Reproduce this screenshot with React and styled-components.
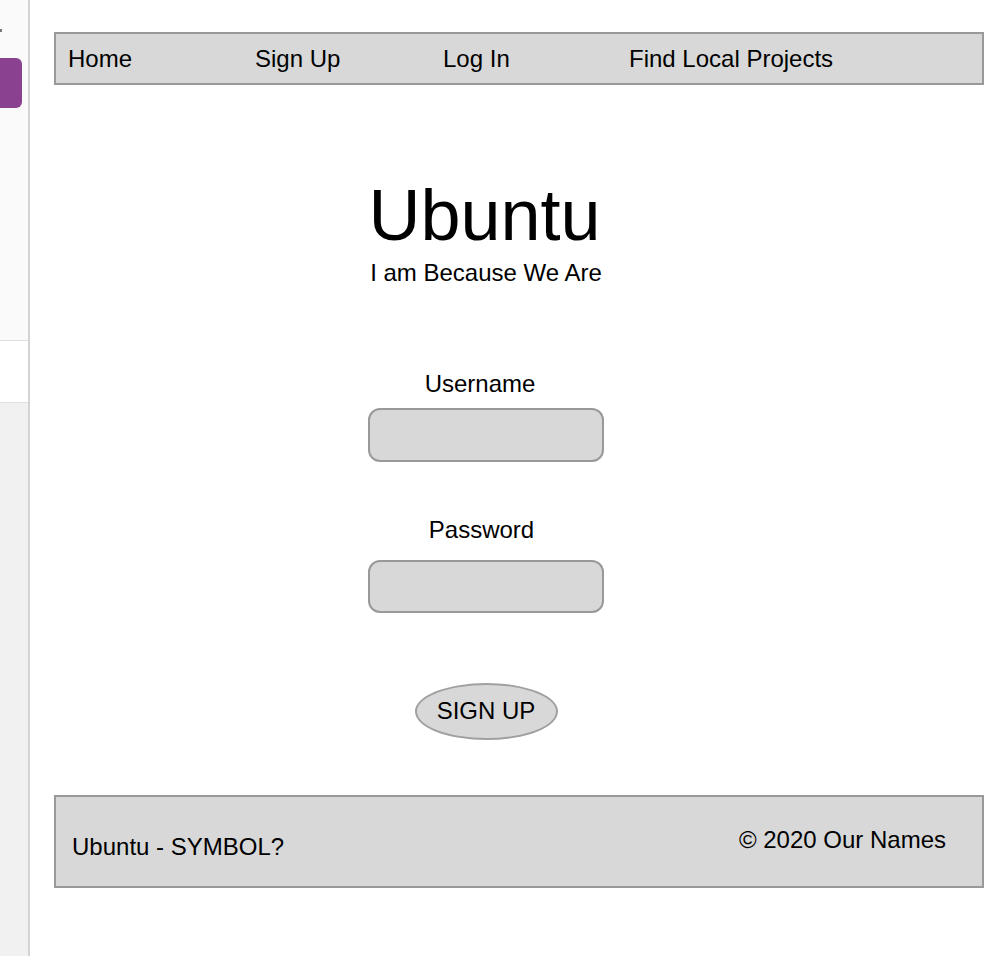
import React from "react";
import styled, { createGlobalStyle } from "styled-components";

const GlobalStyle = createGlobalStyle`
  html, body {
    margin: 0;
    padding: 0;
    background: #ffffff;
    font-family: "Liberation Sans", Arial, Helvetica, sans-serif;
    color: #000;
  }
  * {
    box-sizing: border-box;
  }
`;

const Shell = styled.div`
  display: flex;
  min-height: 100vh;
`;

const Sidebar = styled.aside`
  width: 30px;
  flex-shrink: 0;
  display: flex;
  flex-direction: column;
  border-right: 2px solid #d4d4d4;
  overflow: hidden;
`;

const SideSection = styled.div`
  height: ${(p) => (p.$height ? `${p.$height}px` : "auto")};
  flex: ${(p) => (p.$grow ? 1 : "none")};
  background: ${(p) => p.$bg};
  border-bottom: ${(p) => (p.$line ? "1px solid #dfdfdf" : "none")};
  display: flex;
  flex-direction: column;
`;

const Tick = styled.span`
  width: 2px;
  height: 3px;
  margin-top: 29px;
  background: #7a7a7a;
`;

const PurpleTab = styled.div`
  width: 22px;
  height: 50px;
  margin-top: 26px;
  background: #8a4190;
  border-radius: 0 6px 6px 0;
`;

const Page = styled.div`
  width: 954px;
  padding: 32px 0 0 24px;
`;

const Nav = styled.nav`
  width: 930px;
  height: 53px;
  display: grid;
  grid-template-columns: 187px 188px 186px auto;
  padding: 13px 0 12px 12px;
  background: #d8d8d8;
  border: 2px solid #999999;
`;

const NavLink = styled.a`
  font-size: 24px;
  line-height: 24px;
  color: #000;
  text-decoration: none;
  cursor: pointer;
`;

const FormColumn = styled.main`
  width: 236px;
  margin-left: 314px;
  display: flex;
  flex-direction: column;
  align-items: center;
  text-align: center;
`;

const Title = styled.h1`
  margin: 94px 0 0;
  padding-right: 3px;
  font-size: 72px;
  line-height: 72px;
  font-weight: 400;
  white-space: nowrap;
`;

const Tagline = styled.p`
  margin: 10px 0 0;
  font-size: 24px;
  line-height: 24px;
  white-space: nowrap;
`;

const Label = styled.label`
  display: block;
  margin-top: ${(p) => p.$top}px;
  padding-right: ${(p) => p.$shift}px;
  font-size: 24px;
  line-height: 24px;
`;

const Field = styled.input`
  display: block;
  width: 236px;
  height: ${(p) => p.$height}px;
  margin-top: ${(p) => p.$top}px;
  background: #d8d8d8;
  border: 2px solid #999999;
  border-radius: 12px;
  outline: none;
  font: inherit;
`;

const SignUpButton = styled.button`
  width: 143px;
  height: 57px;
  margin-top: 70px;
  padding: 0 0 2px;
  background: #d8d8d8;
  border: 2px solid #a0a0a0;
  border-radius: 50%;
  font-family: inherit;
  font-size: 24px;
  color: #000;
  cursor: pointer;
`;

const Footer = styled.footer`
  width: 930px;
  height: 93px;
  margin-top: 55px;
  display: flex;
  justify-content: space-between;
  align-items: flex-start;
  padding: 0 36px 0 16px;
  background: #d8d8d8;
  border: 2px solid #999999;
`;

const FooterText = styled.span`
  margin-top: ${(p) => p.$top}px;
  font-size: 24px;
  line-height: 24px;
`;

const navItems = ["Home", "Sign Up", "Log In", "Find Local Projects"];

export default function App() {
  return (
    <>
      <GlobalStyle />
      <Shell>
        <Sidebar>
          <SideSection $height={341} $bg="#fafafa" $line>
            <Tick />
            <PurpleTab />
          </SideSection>
          <SideSection $height={62} $bg="#ffffff" $line />
          <SideSection $grow $bg="#f1f1f1" />
        </Sidebar>

        <Page>
          <Nav>
            {navItems.map((item) => (
              <NavLink key={item}>{item}</NavLink>
            ))}
          </Nav>

          <FormColumn>
            <Title>Ubuntu</Title>
            <Tagline>I am Because We Are</Tagline>

            <Label $top={87} $shift={12} htmlFor="username">
              Username
            </Label>
            <Field id="username" type="text" $top={12} $height={54} />

            <Label $top={56} $shift={9} htmlFor="password">
              Password
            </Label>
            <Field id="password" type="password" $top={18} $height={53} />

            <SignUpButton>SIGN UP</SignUpButton>
          </FormColumn>

          <Footer>
            <FooterText $top={38}>Ubuntu - SYMBOL?</FooterText>
            <FooterText $top={31}>© 2020 Our Names</FooterText>
          </Footer>
        </Page>
      </Shell>
    </>
  );
}
